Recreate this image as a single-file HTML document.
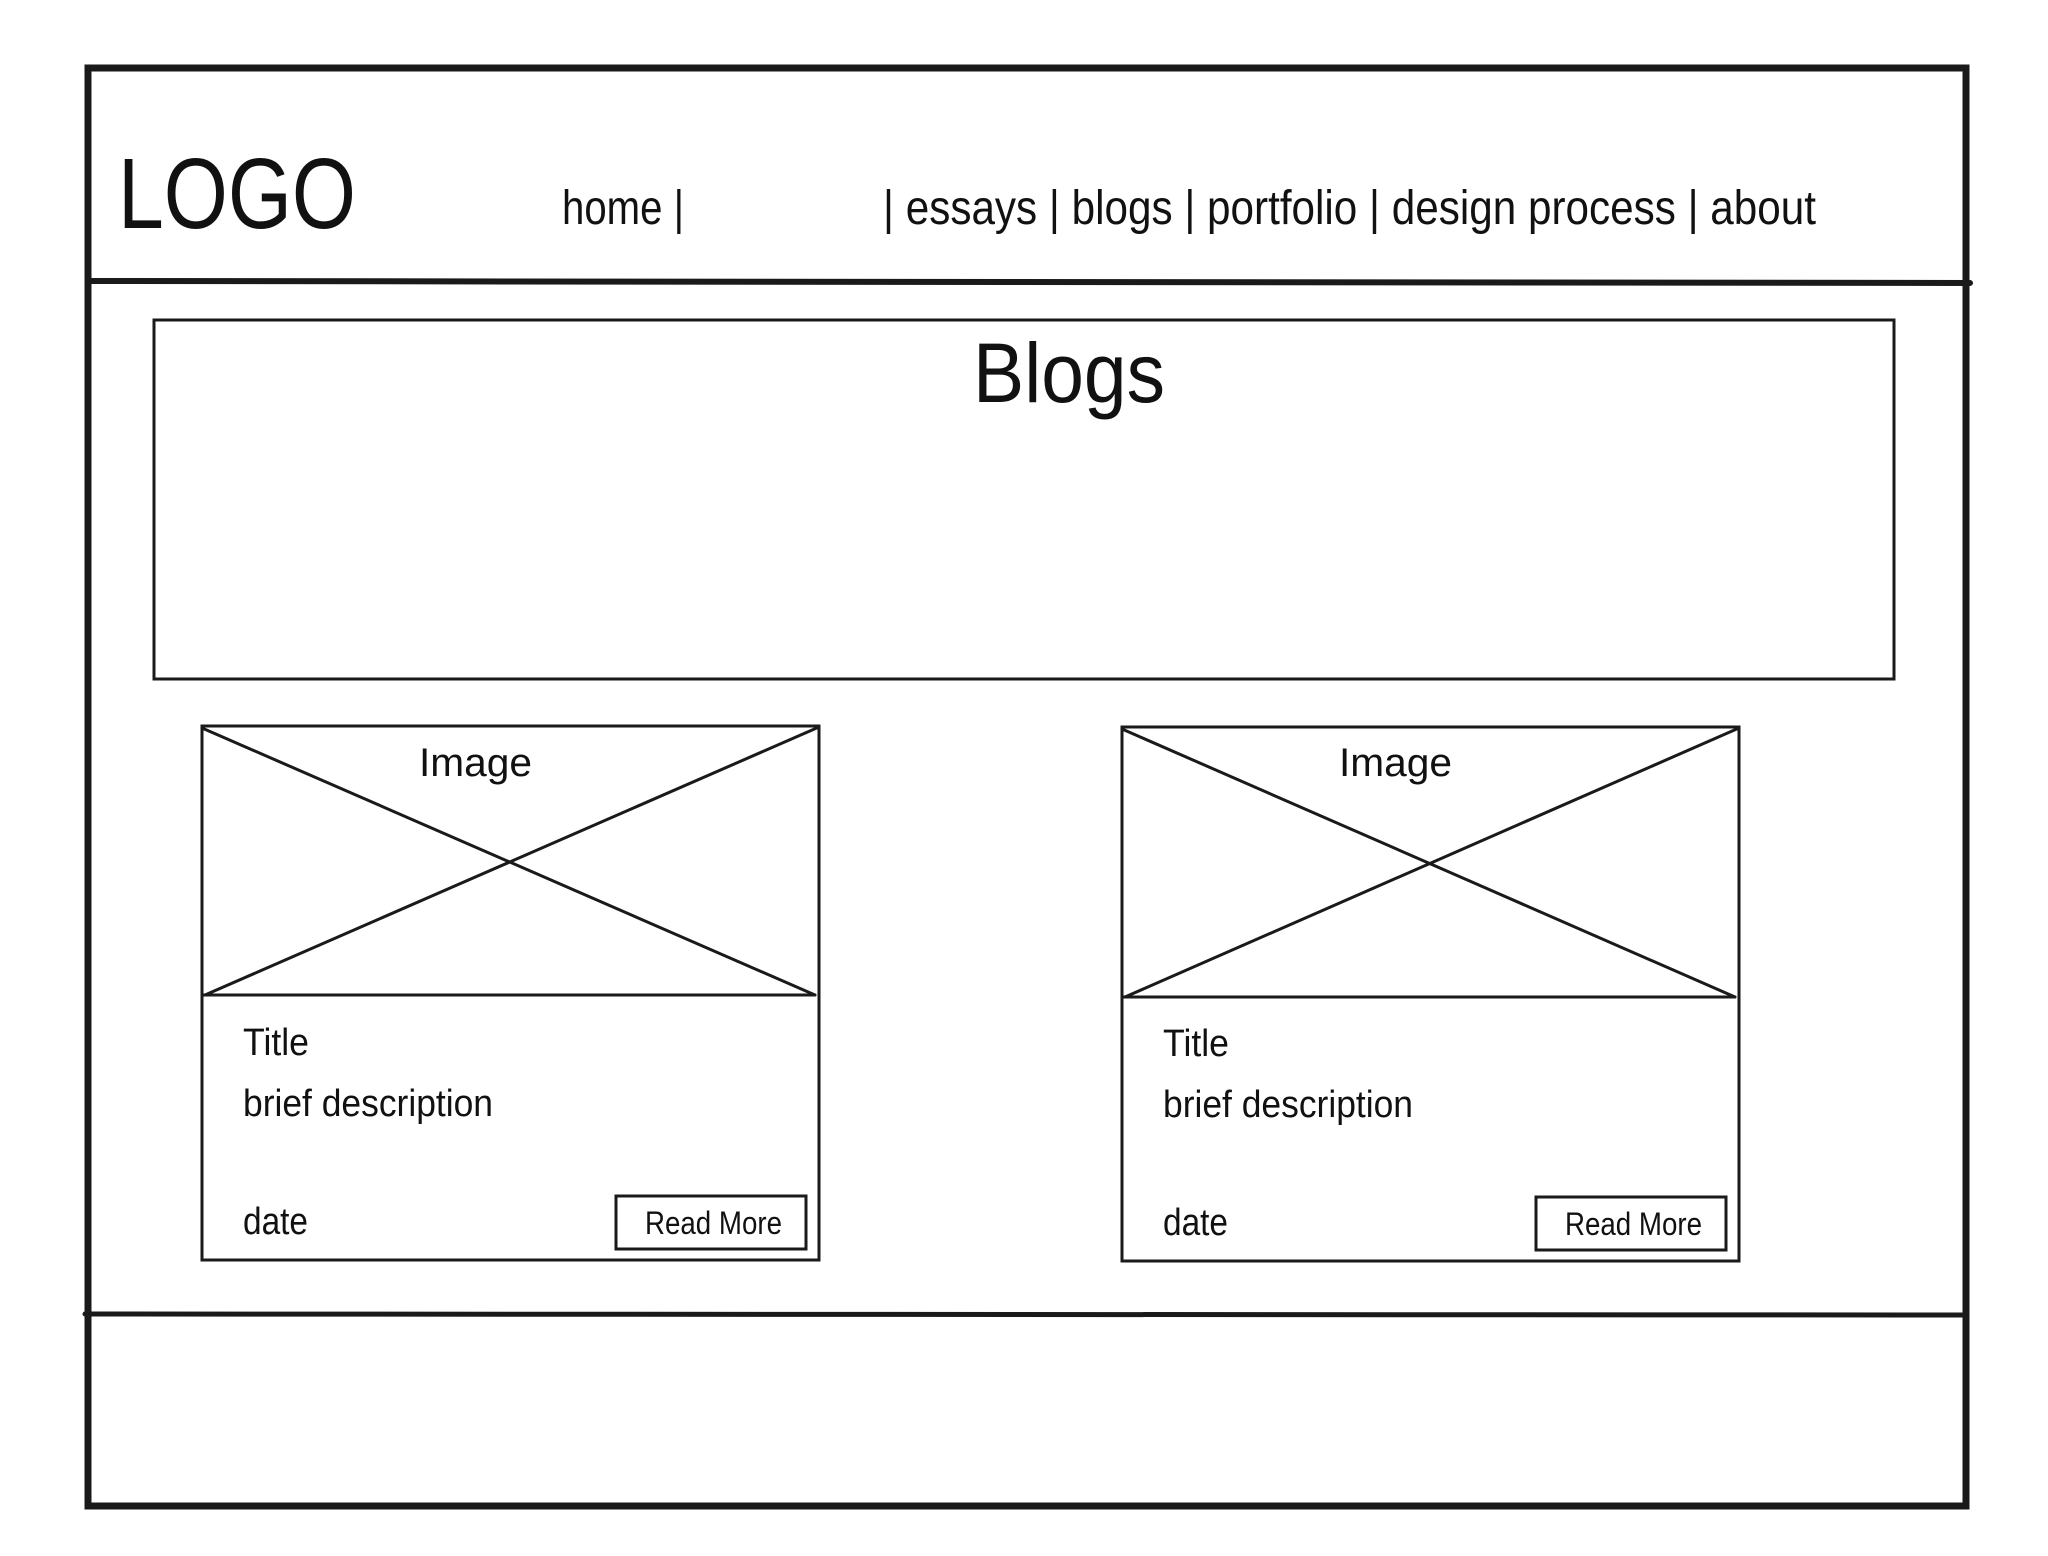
<!DOCTYPE html>
<html><head><meta charset="utf-8"><style>
html,body{margin:0;padding:0;background:#fff;}
svg{display:block}
text{font-family:"Liberation Sans",sans-serif;fill:#111}
</style></head><body>
<svg width="2048" height="1556" viewBox="0 0 2048 1556" xmlns="http://www.w3.org/2000/svg">
<g fill="none" stroke="#1a1a1a" stroke-linecap="round">
<rect x="88" y="68" width="1878" height="1438" stroke-width="7"/>
<line x1="88" y1="281" x2="1970" y2="283" stroke-width="6"/>
<line x1="85" y1="1314" x2="1966" y2="1315" stroke-width="5"/>
<rect x="154" y="320" width="1740" height="359" stroke-width="3"/>
<g stroke-width="3">
<rect x="202" y="726" width="617" height="534"/>
<line x1="202" y1="995" x2="815" y2="995"/>
<line x1="202" y1="728" x2="815" y2="995"/>
<line x1="205" y1="995" x2="819" y2="727"/>
<rect x="616" y="1196" width="190" height="53"/>
<rect x="1122" y="727" width="617" height="534"/>
<line x1="1122" y1="997" x2="1735" y2="997"/>
<line x1="1122" y1="729" x2="1735" y2="997"/>
<line x1="1125" y1="997" x2="1739" y2="728"/>
<rect x="1536" y="1197" width="190" height="53"/>
</g>
</g>
<text x="118" y="228" font-size="100" textLength="238" lengthAdjust="spacingAndGlyphs">LOGO</text>
<text x="562" y="224" font-size="48" textLength="122" lengthAdjust="spacingAndGlyphs">home |</text>
<text x="883" y="224" font-size="48" textLength="933" lengthAdjust="spacingAndGlyphs">| essays | blogs | portfolio | design process | about</text>
<text x="973" y="402" font-size="84" textLength="192" lengthAdjust="spacingAndGlyphs">Blogs</text>
<text x="419" y="776" font-size="40" textLength="113" lengthAdjust="spacingAndGlyphs">Image</text>
<text x="1339" y="776" font-size="40" textLength="113" lengthAdjust="spacingAndGlyphs">Image</text>
<g font-size="38">
<text x="243" y="1055" textLength="66" lengthAdjust="spacingAndGlyphs">Title</text>
<text x="243" y="1116" textLength="250" lengthAdjust="spacingAndGlyphs">brief description</text>
<text x="243" y="1234" textLength="65" lengthAdjust="spacingAndGlyphs">date</text>
<text x="1163" y="1056" textLength="66" lengthAdjust="spacingAndGlyphs">Title</text>
<text x="1163" y="1117" textLength="250" lengthAdjust="spacingAndGlyphs">brief description</text>
<text x="1163" y="1235" textLength="65" lengthAdjust="spacingAndGlyphs">date</text>
</g>
<g font-size="32">
<text x="645" y="1234" textLength="137" lengthAdjust="spacingAndGlyphs">Read More</text>
<text x="1565" y="1235" textLength="137" lengthAdjust="spacingAndGlyphs">Read More</text>
</g>
</svg>
</body></html>
